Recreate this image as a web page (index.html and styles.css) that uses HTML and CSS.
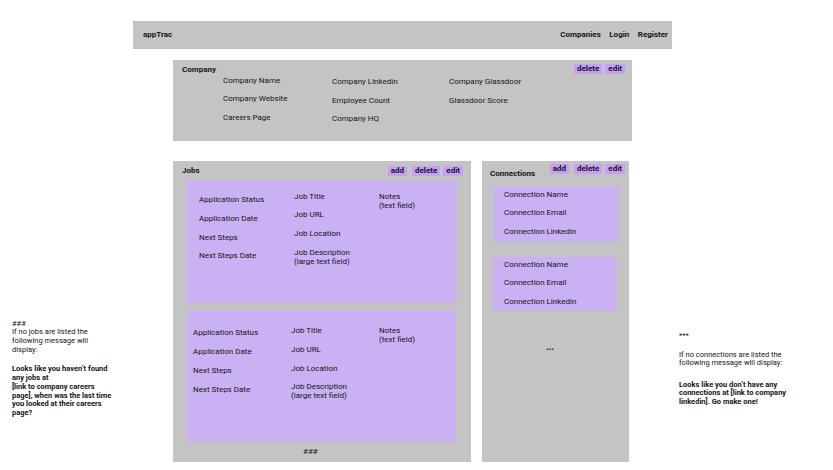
FILE: index.html
```html
<!DOCTYPE html>
<html>
<head>
<meta charset="utf-8">
<title>appTrac</title>
<link rel="stylesheet" href="styles.css">
</head>
<body>
<div class="canvas">
  <aside class="note note-left">
    <p class="note-p">###<br>If no jobs are listed the<br>following message will<br>display:</p>
    <p class="note-p note-bold">Looks like you haven’t found<br>any jobs at<br>[link to company careers<br>page], when was the last time<br>you looked at their careers<br>page?</p>
  </aside>

  <main class="frame">
    <header class="topbar">
      <span class="brand">appTrac</span>
      <nav class="links">
        <a class="link">Companies</a>
        <a class="link">Login</a>
        <a class="link">Register</a>
      </nav>
    </header>

    <section class="company">
      <div class="panel-head">
        <span class="panel-title">Company</span>
        <div class="btns">
          <span class="btn">delete</span>
          <span class="btn">edit</span>
        </div>
      </div>
      <div class="company-cols">
        <div class="col col-c1">
          <span>Company Name</span>
          <span>Company Website</span>
          <span>Careers Page</span>
        </div>
        <div class="col col-c2">
          <span>Company Linkedin</span>
          <span>Employee Count</span>
          <span>Company HQ</span>
        </div>
        <div class="col col-c3">
          <span>Company Glassdoor</span>
          <span>Glassdoor Score</span>
        </div>
      </div>
    </section>

    <div class="lower">
      <section class="jobs">
        <div class="panel-head jobs-head">
          <span class="panel-title">Jobs</span>
          <div class="btns">
            <span class="btn">add</span>
            <span class="btn btn-wide">delete</span>
            <span class="btn">edit</span>
          </div>
        </div>
        <div class="job-card job-card-a">
          <div class="jcol jcol-1">
            <span>Application Status</span>
            <span>Application Date</span>
            <span>Next Steps</span>
            <span>Next Steps Date</span>
          </div>
          <div class="jcol jcol-2">
            <span>Job Title</span>
            <span>Job URL</span>
            <span>Job Location</span>
            <span>Job Description<br>(large text field)</span>
          </div>
          <div class="jcol jcol-3">
            <span>Notes<br>(text field)</span>
          </div>
        </div>
        <div class="job-card job-card-b">
          <div class="jcol jcol-1">
            <span>Application Status</span>
            <span>Application Date</span>
            <span>Next Steps</span>
            <span>Next Steps Date</span>
          </div>
          <div class="jcol jcol-2">
            <span>Job Title</span>
            <span>Job URL</span>
            <span>Job Location</span>
            <span>Job Description<br>(large text field)</span>
          </div>
          <div class="jcol jcol-3">
            <span>Notes<br>(text field)</span>
          </div>
        </div>
        <div class="jobs-foot">###</div>
      </section>

      <section class="conns">
        <div class="panel-head conns-head">
          <span class="panel-title conns-title">Connections</span>
          <div class="btns">
            <span class="btn">add</span>
            <span class="btn btn-wide">delete</span>
            <span class="btn">edit</span>
          </div>
        </div>
        <div class="conn-card conn-card-a">
          <span>Connection Name</span>
          <span>Connection Email</span>
          <span>Connection Linkedin</span>
        </div>
        <div class="conn-card conn-card-b">
          <span>Connection Name</span>
          <span>Connection Email</span>
          <span>Connection Linkedin</span>
        </div>
        <div class="conns-foot">***</div>
      </section>
    </div>
  </main>

  <aside class="note note-right">
    <p class="note-p">***</p>
    <p class="note-p note-gap1">If no connections are listed the<br>following message will display:</p>
    <p class="note-p note-bold note-gap2">Looks like you don’t have any<br>connections at [link to company<br>linkedin]. Go make one!</p>
  </aside>
</div>
</body>
</html>
```

FILE: styles.css
```css
* { box-sizing: border-box; }

html, body {
  margin: 0;
  padding: 0;
  background: #ffffff;
}

body {
  font-family: Roboto, "Liberation Sans", sans-serif;
  font-size: 8px;
  color: #141414;
}

.canvas {
  display: grid;
  grid-template-columns: 133px 539px 161px;
  align-items: start;
  width: 833px;
  height: 470px;
}

/* ---------- notes ---------- */
.note {
  font-size: 7.5px;
  line-height: 8.8px;
  white-space: nowrap;
}
.note-p { margin: 0; }
.note-bold { font-weight: 700; }

.note-left {
  margin-top: 319.5px;
  padding-left: 12px;
}
.note-left .note-bold { margin-top: 10.5px; }

.note-right {
  margin-top: 331.5px;
  padding-left: 7px;
  line-height: 8.5px;
}
.note-right .note-gap1 { margin-top: 10.5px; }
.note-right .note-gap2 { margin-top: 13.2px; }

/* ---------- frame ---------- */
.frame {
  padding-top: 21px;
}

.topbar {
  height: 28px;
  background: #c4c4c4;
  display: flex;
  align-items: center;
  justify-content: space-between;
  padding: 0 4px 0 10px;
  font-weight: 700;
  line-height: 10px;
}

.links {
  display: flex;
  gap: 8.5px;
}
.link { color: #141414; }

/* shared panel head */
.panel-head {
  display: flex;
  justify-content: space-between;
  align-items: center;
  height: 10px;
}
.panel-title {
  font-weight: 700;
  line-height: 10px;
}
.btns {
  display: flex;
  gap: 3px;
}
.btn {
  background: #c7a0f6;
  font-weight: 700;
  line-height: 10px;
  height: 10px;
  padding: 0 3px;
}
.btn-wide { margin-left: 2px; }

/* ---------- company ---------- */
.company {
  margin: 11px 40px 0;
  height: 81px;
  background: #c4c4c4;
  padding: 4px 7px 0 9px;
}
.company .panel-title { margin-top: 1px; }
.company-cols {
  display: flex;
  padding-left: 41px;
  line-height: 10px;
  margin-top: 1.5px;
}
.col {
  display: flex;
  flex-direction: column;
  gap: 8.5px;
}
.col-c1 { width: 109px; }
.col-c2 { width: 117px; margin-top: 1.7px; }
.col-c3 { margin-top: 1.7px; }

/* ---------- lower row ---------- */
.lower {
  display: flex;
  gap: 11px;
  margin: 20px 0 0 40px;
}

.jobs {
  width: 298px;
  height: 301px;
  background: #c4c4c4;
  padding: 4px 8px 0 9px;
}
.jobs-head { height: 11px; }

.job-card {
  background: #c9b1f4;
  margin-left: 5px;
  width: 270px;
  display: grid;
  line-height: 9px;
}
.job-card-a {
  margin-top: 5px;
  height: 122px;
  grid-template-columns: 95px 85px 1fr;
  padding: 10.5px 0 0 12px;
}
.job-card-a .jcol-1 { margin-top: 3.7px; }

.job-card-b {
  margin-top: 8px;
  height: 131px;
  width: 269px;
  grid-template-columns: 98px 88px 1fr;
  padding: 15.2px 0 0 6px;
}
.job-card-b .jcol-1 { margin-top: 2.3px; }
.job-card-b .jcol-3 { margin-top: 0.3px; }

.jcol {
  display: flex;
  flex-direction: column;
  gap: 9.7px;
}

.jobs-foot {
  margin-top: 5px;
  line-height: 10px;
  padding-left: 121px;
}

/* ---------- connections ---------- */
.conns {
  width: 147px;
  height: 301px;
  background: #c4c4c4;
  padding: 3px 4px 0 8px;
}
.conns-head {
  align-items: flex-start;
  height: 15px;
}
.conns-title { margin-top: 5px; }

.conn-card {
  background: #c9b1f4;
  display: flex;
  flex-direction: column;
  gap: 9.5px;
  line-height: 9px;
  padding-top: 2.5px;
}
.conn-card-a {
  margin: 8px 0 0 4px;
  width: 125px;
  height: 55px;
  padding-left: 10px;
}
.conn-card-b {
  margin: 15px 0 0 3px;
  width: 124px;
  height: 54px;
  padding-left: 11px;
}
.conns-foot {
  margin-top: 34px;
  line-height: 10px;
  padding-left: 56px;
  font-size: 6px;
}
```
